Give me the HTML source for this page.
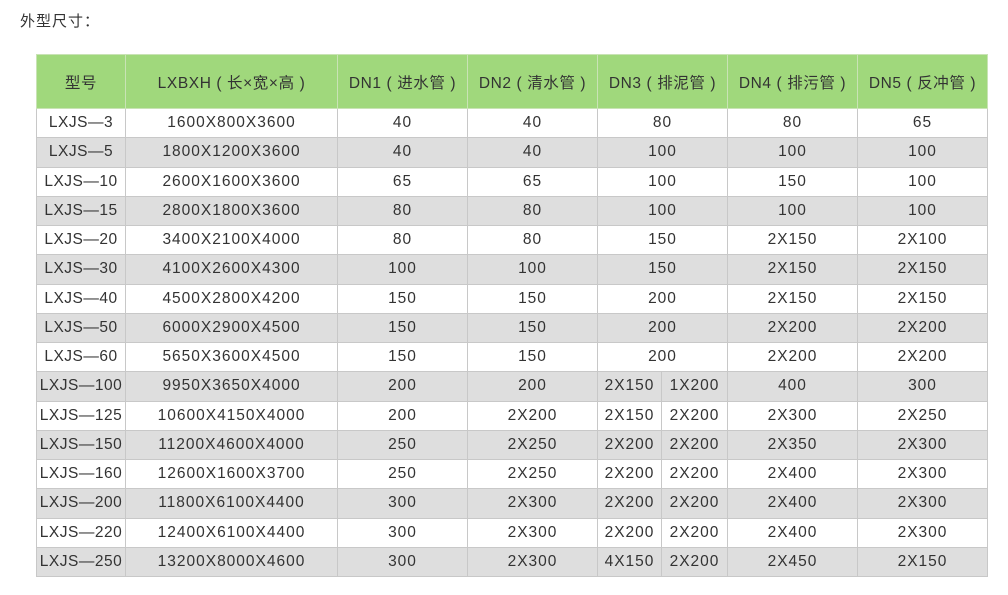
<!DOCTYPE html>
<html><head><meta charset="utf-8"><style>
body{margin:0;background:#fff;width:1008px;height:595px;overflow:hidden;font-family:"Liberation Sans","Noto Sans CJK SC",sans-serif;color:#333;}
.t{position:absolute;left:20px;top:10px;font-size:15px;letter-spacing:1px;}
table{position:absolute;left:36px;top:54px;border-collapse:collapse;table-layout:fixed;font-size:15.5px;letter-spacing:1px;}
td{border:1px solid #c8c8c8;text-align:center;padding:0;height:28.25px;white-space:nowrap;overflow:hidden;}
td:first-child{letter-spacing:0.5px;}
tr.h td{background:#a0d87c;height:53px;border-color:#c9e3b5;letter-spacing:0.6px;}
tr:nth-child(odd):not(.h) td{background:#dedede;}
</style></head><body>
<div class="t">外型尺寸：</div>
<table>
<colgroup><col style="width:89px"><col style="width:212px"><col style="width:130px"><col style="width:130px"><col style="width:64px"><col style="width:66px"><col style="width:130px"><col style="width:130px"></colgroup>
<tr class="h"><td>型号</td><td>LXBXH ( 长×宽×高 )</td><td>DN1 ( 进水管 )</td><td>DN2 ( 清水管 )</td><td colspan="2">DN3 ( 排泥管 )</td><td>DN4 ( 排污管 )</td><td>DN5 ( 反冲管 )</td></tr>
<tr><td>LXJS—3</td><td>1600X800X3600</td><td>40</td><td>40</td><td colspan="2">80</td><td>80</td><td>65</td></tr>
<tr><td>LXJS—5</td><td>1800X1200X3600</td><td>40</td><td>40</td><td colspan="2">100</td><td>100</td><td>100</td></tr>
<tr><td>LXJS—10</td><td>2600X1600X3600</td><td>65</td><td>65</td><td colspan="2">100</td><td>150</td><td>100</td></tr>
<tr><td>LXJS—15</td><td>2800X1800X3600</td><td>80</td><td>80</td><td colspan="2">100</td><td>100</td><td>100</td></tr>
<tr><td>LXJS—20</td><td>3400X2100X4000</td><td>80</td><td>80</td><td colspan="2">150</td><td>2X150</td><td>2X100</td></tr>
<tr><td>LXJS—30</td><td>4100X2600X4300</td><td>100</td><td>100</td><td colspan="2">150</td><td>2X150</td><td>2X150</td></tr>
<tr><td>LXJS—40</td><td>4500X2800X4200</td><td>150</td><td>150</td><td colspan="2">200</td><td>2X150</td><td>2X150</td></tr>
<tr><td>LXJS—50</td><td>6000X2900X4500</td><td>150</td><td>150</td><td colspan="2">200</td><td>2X200</td><td>2X200</td></tr>
<tr><td>LXJS—60</td><td>5650X3600X4500</td><td>150</td><td>150</td><td colspan="2">200</td><td>2X200</td><td>2X200</td></tr>
<tr><td>LXJS—100</td><td>9950X3650X4000</td><td>200</td><td>200</td><td>2X150</td><td>1X200</td><td>400</td><td>300</td></tr>
<tr><td>LXJS—125</td><td>10600X4150X4000</td><td>200</td><td>2X200</td><td>2X150</td><td>2X200</td><td>2X300</td><td>2X250</td></tr>
<tr><td>LXJS—150</td><td>11200X4600X4000</td><td>250</td><td>2X250</td><td>2X200</td><td>2X200</td><td>2X350</td><td>2X300</td></tr>
<tr><td>LXJS—160</td><td>12600X1600X3700</td><td>250</td><td>2X250</td><td>2X200</td><td>2X200</td><td>2X400</td><td>2X300</td></tr>
<tr><td>LXJS—200</td><td>11800X6100X4400</td><td>300</td><td>2X300</td><td>2X200</td><td>2X200</td><td>2X400</td><td>2X300</td></tr>
<tr><td>LXJS—220</td><td>12400X6100X4400</td><td>300</td><td>2X300</td><td>2X200</td><td>2X200</td><td>2X400</td><td>2X300</td></tr>
<tr><td>LXJS—250</td><td>13200X8000X4600</td><td>300</td><td>2X300</td><td>4X150</td><td>2X200</td><td>2X450</td><td>2X150</td></tr>
</table>
</body></html>
